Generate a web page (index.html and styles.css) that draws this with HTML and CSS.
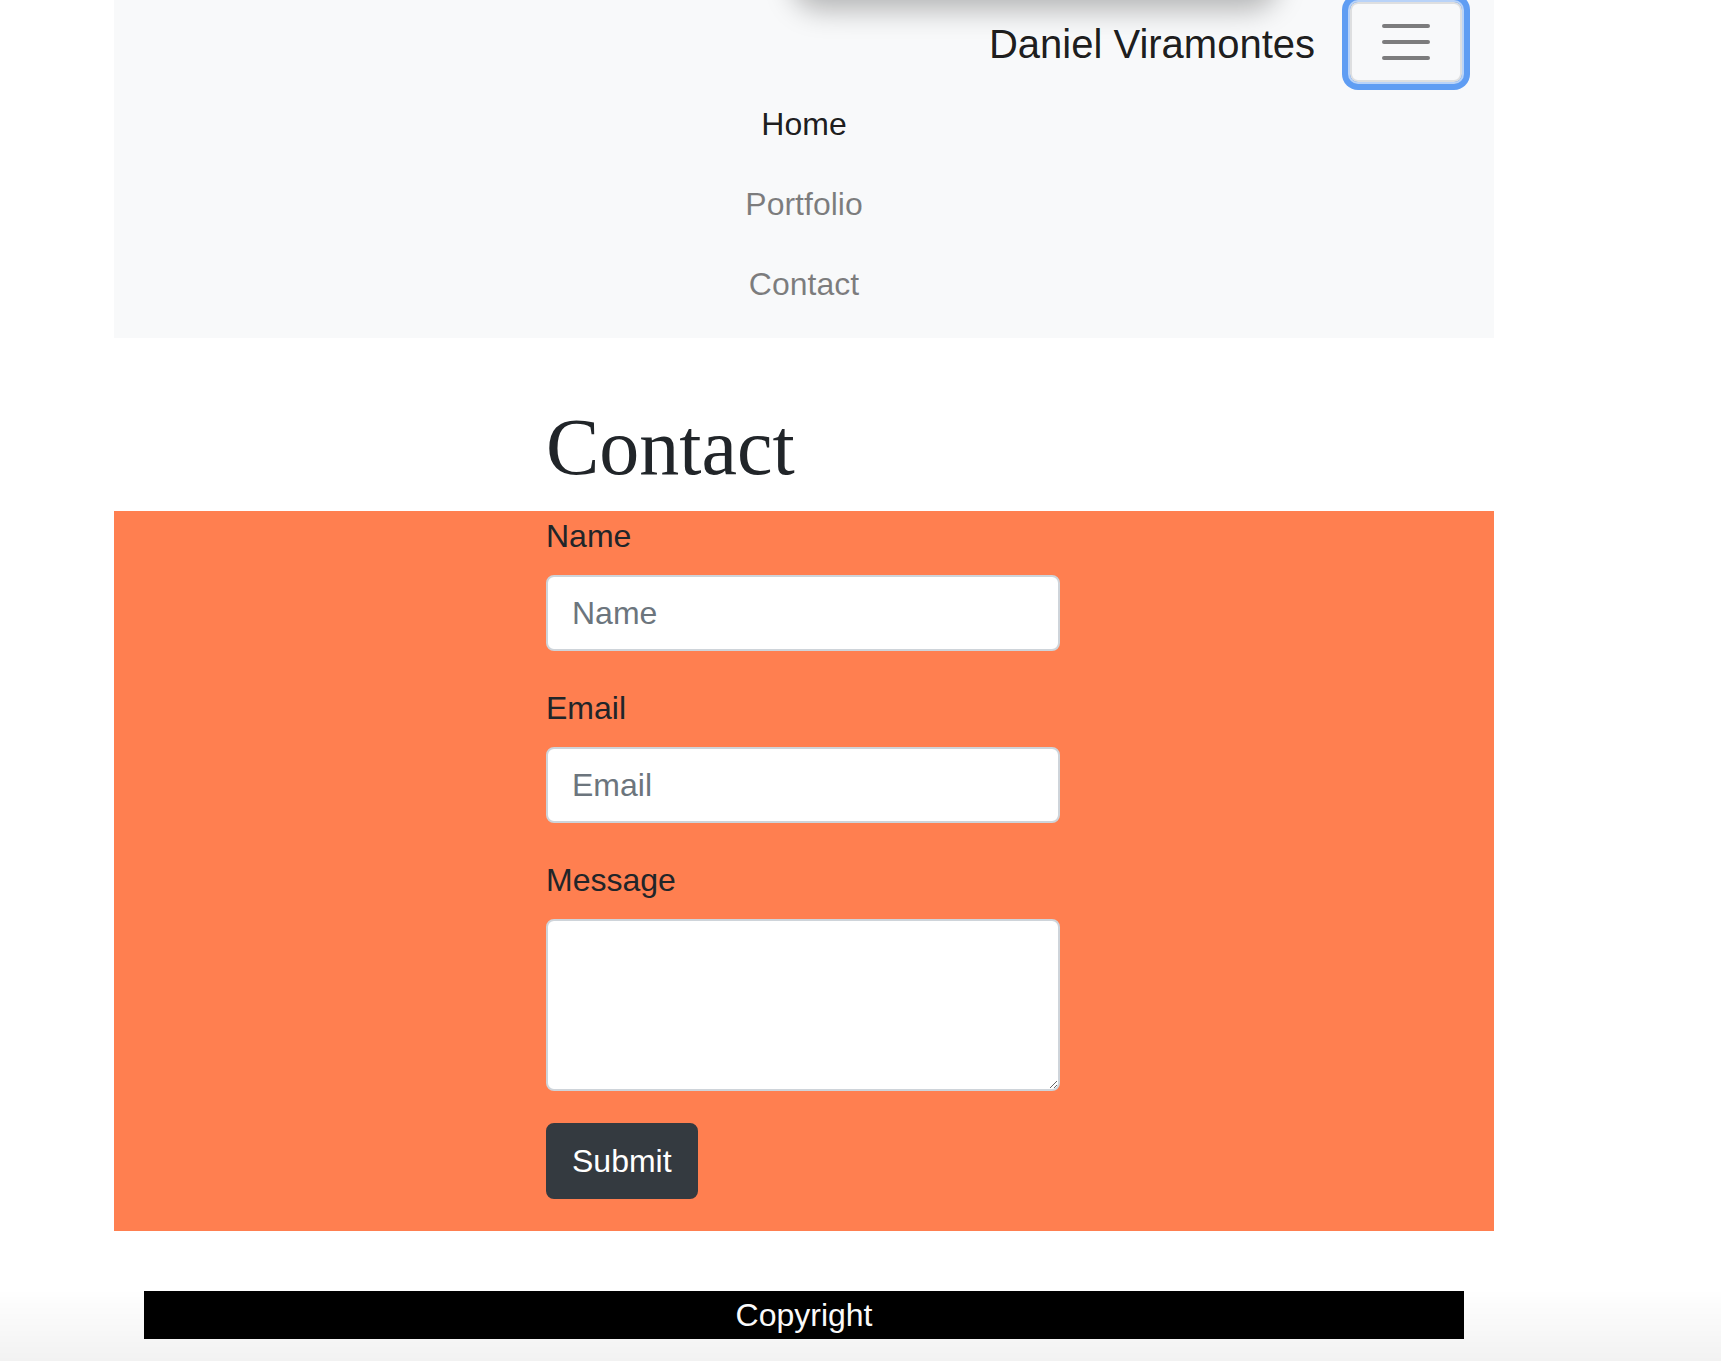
FILE: index.html
```html
<!DOCTYPE html>
<html lang="en">
<head>
<meta charset="utf-8">
<title>Contact - Daniel Viramontes</title>
<link rel="stylesheet" href="styles.css">
</head>
<body>
<div class="top-shadow"></div>
<div class="page">
  <nav class="navbar">
    <div class="navbar-top">
      <a class="brand" href="#">Daniel Viramontes</a>
      <button class="toggler" type="button" aria-label="Toggle navigation">
        <svg class="toggler-icon" viewBox="0 0 30 30" width="60" height="60">
          <path d="M4 7h22M4 15h22M4 23h22" stroke="rgba(0,0,0,0.5)" stroke-width="2" stroke-linecap="round" fill="none"/>
        </svg>
      </button>
    </div>
    <ul class="nav">
      <li><a class="nav-link active" href="#">Home</a></li>
      <li><a class="nav-link" href="#">Portfolio</a></li>
      <li><a class="nav-link" href="#">Contact</a></li>
    </ul>
  </nav>

  <div class="col">
    <h1 class="title">Contact</h1>
  </div>

  <section class="contact">
    <form class="col form">
      <div class="form-group">
        <label class="label" for="name">Name</label>
        <input class="control" id="name" type="text" placeholder="Name">
      </div>
      <div class="form-group">
        <label class="label" for="email">Email</label>
        <input class="control" id="email" type="email" placeholder="Email">
      </div>
      <div class="form-group">
        <label class="label" for="message">Message</label>
        <textarea class="control textarea" id="message" rows="3"></textarea>
      </div>
      <button class="submit" type="submit">Submit</button>
    </form>
  </section>

  <footer class="footer">Copyright</footer>
</div>
<div class="bottom-fade"></div>
</body>
</html>
```

FILE: styles.css
```css
html, body {
  margin: 0;
  padding: 0;
  background: #ffffff;
}

body {
  font-family: "Liberation Sans", Arial, sans-serif;
  color: #212529;
  min-height: 1361px;
}

.page {
  width: 1380px;
  margin-left: 114px;
}

/* navbar */
.navbar {
  background: #f8f9fa;
  padding: 2px 32px 16px;
}

.navbar-top {
  display: flex;
  justify-content: flex-end;
  align-items: center;
  height: 80px;
}

.brand {
  font-size: 40px;
  line-height: 60px;
  padding: 12px 0 8px;
  margin-right: 35px;
  color: rgba(0, 0, 0, 0.9);
  text-decoration: none;
  white-space: nowrap;
}

.toggler {
  box-sizing: border-box;
  width: 112px;
  height: 80px;
  padding: 8px 24px;
  background: transparent;
  border: 2px solid rgba(0, 0, 0, 0.1);
  border-radius: 8px;
  display: flex;
  align-items: center;
  justify-content: center;
  box-shadow: 0 0 0 2px #b9d3f8, 0 0 0 8px #5f9df3;
}

.toggler-icon {
  display: block;
}

.nav {
  list-style: none;
  margin: 0;
  padding: 0;
  text-align: center;
}

.nav-link {
  display: block;
  padding: 18px 0 14px;
  font-size: 32px;
  line-height: 48px;
  color: rgba(0, 0, 0, 0.5);
  text-decoration: none;
}

.nav-link.active {
  color: rgba(0, 0, 0, 0.9);
}

/* content column */
.col {
  width: 514px;
  margin-left: 432px;
}

.title {
  font-family: "Liberation Serif", "Times New Roman", serif;
  font-weight: 400;
  font-size: 80px;
  line-height: 96px;
  margin: 61px 0 16px;
  color: #212529;
}

.contact {
  background: #ff7f50;
  padding-bottom: 32px;
}

.form {
  margin-top: 0;
  margin-bottom: 0;
}

.form-group {
  margin-bottom: 32px;
}

.label {
  display: block;
  font-size: 32px;
  line-height: 48px;
  padding-top: 1px;
  margin-bottom: 15px;
  color: #212529;
}

.control {
  display: block;
  box-sizing: border-box;
  width: 100%;
  height: 76px;
  padding: 12px 24px;
  font-family: "Liberation Sans", Arial, sans-serif;
  font-size: 32px;
  line-height: 48px;
  color: #495057;
  background: #ffffff;
  border: 2px solid #ced4da;
  border-radius: 8px;
  margin: 0;
  outline: none;
}

.control::placeholder {
  color: #6c757d;
  opacity: 1;
}

.textarea {
  height: 172px;
  resize: vertical;
}

.submit {
  display: block;
  font-family: "Liberation Sans", Arial, sans-serif;
  font-size: 32px;
  line-height: 48px;
  padding: 12px 24px;
  color: #ffffff;
  background: #343a40;
  border: 2px solid #343a40;
  border-radius: 8px;
}

.footer {
  margin: 60px 30px 0;
  background: #000000;
  color: #ffffff;
  text-align: center;
  font-size: 32px;
  line-height: 48px;
}

/* decorative overlays */
.top-shadow {
  position: absolute;
  top: -50px;
  left: 800px;
  width: 470px;
  height: 50px;
  background: #ffffff;
  box-shadow: 0 2px 28px 8px rgba(0, 0, 0, 0.28);
  border-radius: 20px;
  z-index: 5;
}

.bottom-fade {
  position: fixed;
  left: 0;
  right: 0;
  bottom: 0;
  height: 72px;
  background: linear-gradient(to bottom, rgba(0, 0, 0, 0), rgba(0, 0, 0, 0.05));
  pointer-events: none;
}
```
